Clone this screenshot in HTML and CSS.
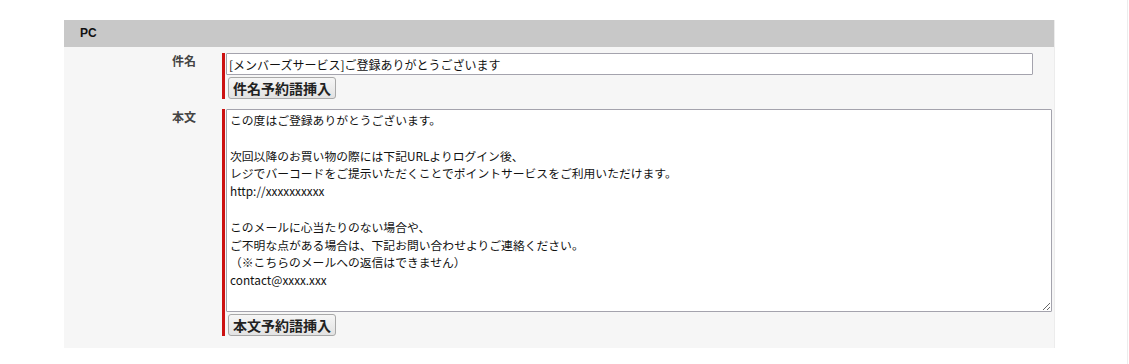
FILE: index.html
```html
<!DOCTYPE html>
<html lang="ja">
<head>
<meta charset="utf-8">
<title>PC</title>
<link rel="stylesheet" href="styles.css">
</head>
<body>
<div class="page">
  <section class="panel">
    <div class="panel-head">PC</div>
    <div class="panel-body">
      <div class="row">
        <div class="label">件名</div>
        <div class="field">
          <input class="text-input" type="text" value="[メンバーズサービス]ご登録ありがとうございます">
          <button class="btn" type="button">件名予約語挿入</button>
        </div>
      </div>
      <div class="row">
        <div class="label">本文</div>
        <div class="field">
          <textarea class="textarea">この度はご登録ありがとうございます。

次回以降のお買い物の際には下記URLよりログイン後、
レジでバーコードをご提示いただくことでポイントサービスをご利用いただけます。
http://xxxxxxxxxx

このメールに心当たりのない場合や、
ご不明な点がある場合は、下記お問い合わせよりご連絡ください。
（※こちらのメールへの返信はできません）
contact@xxxx.xxx</textarea>
          <button class="btn" type="button">本文予約語挿入</button>
        </div>
      </div>
    </div>
  </section>
</div>
</body>
</html>
```
FILE: styles.css
```css
html, body {
  margin: 0;
  padding: 0;
  background: #ffffff;
}
body {
  font-family: "Noto Sans CJK JP", "DejaVu Sans", sans-serif;
  font-size: 12px;
  color: #222;
}
.page {
  width: 1128px;
  height: 364px;
  border-right: 1px solid #ececec;
  padding-top: 20px;
  box-sizing: border-box;
}
.panel {
  margin-left: 64px;
  width: 991px;
  box-sizing: border-box;
  border-right: 1px solid #ececec;
}
.panel-head {
  height: 27px;
  line-height: 27px;
  background: #c8c8c8;
  padding-left: 16px;
  font-family: "Liberation Sans", Arial, sans-serif;
  font-weight: bold;
  font-size: 12px;
  color: #111;
}
.panel-body {
  background: #f6f6f6;
  padding: 6px 0 12px;
  display: flex;
  flex-direction: column;
  gap: 10px;
}
.row {
  display: grid;
  grid-template-columns: 158px 1fr;
}
.label {
  text-align: right;
  padding-right: 26px;
  font-weight: bold;
  font-size: 12px;
  line-height: 16px;
  color: #444;
}
.field {
  border-left: 3px solid #cc1111;
  padding-left: 1px;
  display: flex;
  flex-direction: column;
  align-items: flex-start;
  gap: 2px;
}
.text-input {
  width: 807px;
  height: 22px;
  box-sizing: border-box;
  border: 1px solid #a4a3ad;
  border-radius: 1px;
  background: #fff;
  padding: 0 2px;
  font-family: "Noto Sans CJK JP", sans-serif;
  font-size: 12px;
  color: #111;
  margin: 0;
}
.textarea {
  width: 826px;
  height: 203px;
  box-sizing: border-box;
  border: 1px solid #a4a3ad;
  border-radius: 1px;
  background: #fff;
  padding: 1px 3px;
  font-family: "Noto Sans CJK JP", sans-serif;
  font-size: 11.8px;
  line-height: 17.8px;
  color: #111;
  margin: 0;
}
.btn {
  margin-left: 2px;
  height: 22px;
  padding: 0 4px;
  border: 1px solid #a8a8a8;
  border-radius: 3px;
  background: linear-gradient(#f6f6f6, #e2e2e2);
  font-family: "Noto Sans CJK JP", sans-serif;
  font-weight: bold;
  font-size: 14px;
  line-height: 18px;
  color: #222;
}
```
